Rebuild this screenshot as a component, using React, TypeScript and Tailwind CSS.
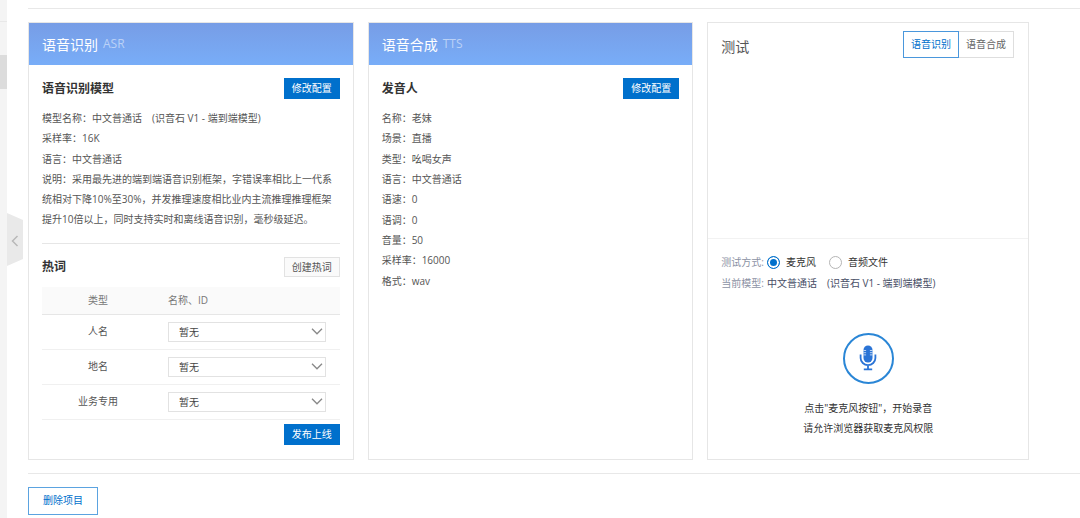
import { useState } from 'react';
import type { ReactNode } from 'react';
import { clsx } from 'clsx';

const voiceSettings = [
  { label: '名称', value: '老妹' },
  { label: '场景', value: '直播' },
  { label: '类型', value: '吆喝女声' },
  { label: '语言', value: '中文普通话' },
  { label: '语速', value: '0' },
  { label: '语调', value: '0' },
  { label: '音量', value: '50' },
  { label: '采样率', value: '16000' },
  { label: '格式', value: 'wav' },
];

const hotwordTypes = ['人名', '地名', '业务专用'];

const testTabs = ['语音识别', '语音合成'];

function SmallButton({ children, outline }: { children: ReactNode; outline?: boolean }) {
  return (
    <button
      type="button"
      className={clsx(
        'border px-[7px] text-[10px]',
        outline
          ? 'h-5 border-[#e2e2e2] bg-[#fafafa] leading-[18px] text-[#555]'
          : 'h-[21px] border-[#0070cc] bg-[#0070cc] leading-[19px] text-white'
      )}
    >
      {children}
    </button>
  );
}

function CardHeader({ title, tag }: { title: string; tag: string }) {
  return (
    <header className="flex h-[42px] items-center gap-[5px] bg-linear-to-b from-[#779de6] to-[#78adf8] px-[13px] text-white">
      <h2 className="text-[14px]">{title}</h2>
      <span className="text-[12px] text-white/50">{tag}</span>
    </header>
  );
}

function ModelName() {
  return (
    <>
      中文普通话<span className="ml-2.5">(识音石 V1 - 端到端模型)</span>
    </>
  );
}

function HotwordSelect({ label }: { label: string }) {
  return (
    <div className="relative">
      <select
        aria-label={label}
        className="block h-5 w-full appearance-none rounded-none border border-[#e2e2e2] bg-white px-2.5 text-[10px] leading-[18px] text-[#444]"
      >
        <option>暂无</option>
      </select>
      <svg
        viewBox="0 0 12 7"
        className="pointer-events-none absolute top-1.5 right-[3px] h-[7px] w-3 fill-none stroke-[#888]"
      >
        <path d="M1 0.8 6 5.8 11 0.8" strokeWidth="1.3" />
      </svg>
    </div>
  );
}

function AsrCard() {
  return (
    <section className="border border-[#e6e6e6]">
      <CardHeader title="语音识别" tag="ASR" />
      <div className="px-[13px] pt-[13px] pb-3.5">
        <div className="flex items-center justify-between">
          <h3 className="text-[12px] font-bold text-[#333]">语音识别模型</h3>
          <SmallButton>修改配置</SmallButton>
        </div>
        <div className="mt-[9px] grid min-h-[121px] leading-5">
          <p>
            模型名称：
            <ModelName />
          </p>
          <p>采样率：16K</p>
          <p>语言：中文普通话</p>
          <p>
            说明：采用最先进的端到端语音识别框架，字错误率相比上一代系统相对下降10%至30%，并发推理速度相比业内主流推理推理框架提升10倍以上，同时支持实时和离线语音识别，毫秒级延迟。
          </p>
        </div>

        <div className="mt-3.5 flex items-center justify-between border-t border-[#e6e6e6] pt-[13px]">
          <h3 className="text-[12px] font-bold text-[#333]">热词</h3>
          <SmallButton outline>创建热词</SmallButton>
        </div>
        <table className="mt-2.5 w-full table-fixed border-collapse">
          <thead>
            <tr className="h-[27px] border-b border-[#e6e6e6] bg-[#fafafa] text-[#777]">
              <th className="w-[112px] font-normal">类型</th>
              <th className="px-3.5 text-left font-normal">名称、ID</th>
            </tr>
          </thead>
          <tbody>
            {hotwordTypes.map((type) => (
              <tr key={type} className="border-b border-[#f0f0f0]">
                <td className="text-center">{type}</td>
                <td className="px-3.5 py-[7px]">
                  <HotwordSelect label={type} />
                </td>
              </tr>
            ))}
          </tbody>
        </table>
        <div className="mt-1 flex justify-end">
          <SmallButton>发布上线</SmallButton>
        </div>
      </div>
    </section>
  );
}

function TtsCard() {
  return (
    <section className="border border-[#e6e6e6]">
      <CardHeader title="语音合成" tag="TTS" />
      <div className="px-[13px] pt-[13px]">
        <div className="flex items-center justify-between">
          <h3 className="text-[12px] font-bold text-[#333]">发音人</h3>
          <SmallButton>修改配置</SmallButton>
        </div>
        <ul className="mt-[9px] grid min-h-[183px] leading-5">
          {voiceSettings.map(({ label, value }) => (
            <li key={label}>
              {label}：{value}
            </li>
          ))}
        </ul>
      </div>
    </section>
  );
}

function MicIcon() {
  return (
    <svg viewBox="0 0 18 26" className="h-[26px] w-[18px]">
      <rect x="4.5" y="0.5" width="9" height="17" rx="4.5" fill="#2b74d6" />
      <path
        d="M4.5 5.5h2.6M10.9 5.5h2.6M4.5 7.7h2.6M10.9 7.7h2.6M4.5 9.9h2.6M10.9 9.9h2.6"
        stroke="#fff"
        strokeWidth="0.7"
      />
      <path
        d="M1.6 9.5v3.4a7.4 7.2 0 0 0 14.8 0V9.5M9 20.2v4M4.8 24.4h8.4"
        fill="none"
        stroke="#2b74d6"
        strokeWidth="1.8"
      />
    </svg>
  );
}

function SourceRadio({ label, value, defaultChecked }: { label: string; value: string; defaultChecked?: boolean }) {
  return (
    <label className="flex items-center gap-1.5 text-[#333]">
      <input
        type="radio"
        name="source"
        value={value}
        defaultChecked={defaultChecked}
        className="size-[13px] appearance-none rounded-full border border-[#b5b5b5] bg-white checked:border-[#0070cc] checked:bg-[#0070cc] checked:shadow-[inset_0_0_0_2px_#fff]"
      />
      {label}
    </label>
  );
}

function TestCard() {
  const [activeTab, setActiveTab] = useState(testTabs[0]);

  return (
    <section className="flex flex-col border border-[#e6e6e6]">
      <div className="flex flex-1 items-start justify-between border-b border-[#f2f2f2] pt-2 pr-3.5 pl-[13px]">
        <h2 className="pt-1 text-[14px] leading-6 text-[#555]">测试</h2>
        <div className="flex">
          {testTabs.map((tab) => (
            <button
              key={tab}
              type="button"
              onClick={() => setActiveTab(tab)}
              className={clsx(
                'h-[27px] border px-[7px] text-[10px]',
                tab === activeTab
                  ? 'border-[#4a97dc] text-[#0070cc]'
                  : 'border-[#dedede] text-[#666] first:border-r-0 last:border-l-0'
              )}
            >
              {tab}
            </button>
          ))}
        </div>
      </div>
      <div className="px-[13px] pt-3.5 pb-[21px]">
        <div className="flex h-5 items-center gap-[3px] text-[#8c92a4]">
          测试方式:
          <div className="flex gap-[13px]">
            <SourceRadio label="麦克风" value="mic" defaultChecked />
            <SourceRadio label="音频文件" value="file" />
          </div>
        </div>
        <p className="leading-5 text-[#474e66]">
          <span className="mr-[3px] text-[#8c92a4]">当前模型:</span>
          <ModelName />
        </p>
        <div className="mt-10 flex flex-col items-center text-[#333]">
          <button
            type="button"
            aria-label="麦克风"
            className="flex size-[51px] items-center justify-center rounded-full border-2 border-[#2a86d6]"
          >
            <MicIcon />
          </button>
          <p className="mt-3.5 text-center leading-5">
            点击"麦克风按钮"，开始录音
            <br />
            请允许浏览器获取麦克风权限
          </p>
        </div>
      </div>
    </section>
  );
}

export default function App() {
  return (
    <div className="flex min-h-screen bg-white font-['Open_Sans','Noto_Sans_CJK_SC',sans-serif] text-[10px] text-[#555]">
      <aside className="relative w-[7px] shrink-0 bg-[#f4f4f4]">
        <div className="h-[22px] border-b border-[#e8e8e8]" />
        <div className="mt-[33px] h-[34px] bg-[#dcdcdc]" />
        <button type="button" aria-label="收起" className="absolute top-[213px] left-[7px]">
          <svg viewBox="0 0 16 54" className="h-[54px] w-4">
            <path d="M0 0 16 7V46L0 53Z" fill="#e9e9e9" />
            <path d="M10.5 23 5.5 28l5 5" fill="none" stroke="#b8b8b8" strokeWidth="1.5" />
          </svg>
        </button>
      </aside>
      <main className="min-w-0 flex-1 pt-2 pl-[21px]">
        <div className="grid grid-cols-[326fr_326fr_322fr] gap-3.5 border-y border-[#e8e8e8] py-[13px] pr-[51px]">
          <AsrCard />
          <TtsCard />
          <TestCard />
        </div>
        <button
          type="button"
          className="mt-[13px] h-7 w-[70px] border border-[#5ba3e0] text-[10px] text-[#0070cc]"
        >
          删除项目
        </button>
      </main>
    </div>
  );
}
